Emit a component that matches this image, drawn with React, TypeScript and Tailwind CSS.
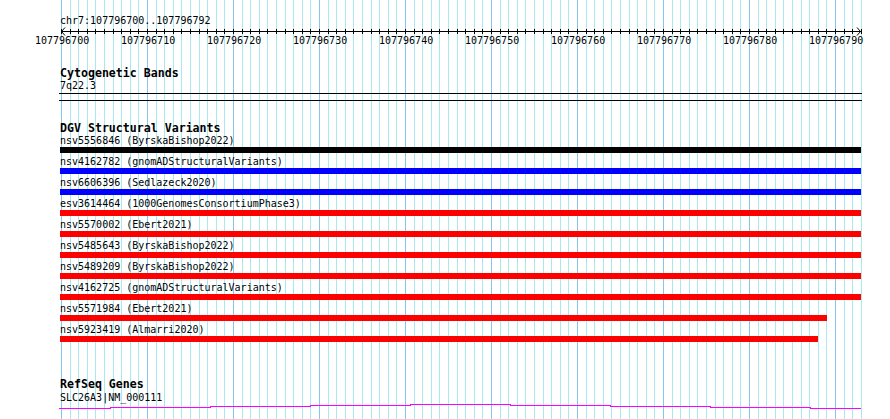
import React from "react";

const X0 = 61;
const STEP = 8.6;
const gx = (i: number) => Math.round(X0 + i * STEP);

const rows: { label: string; color: string; w: number }[] = [
  { label: "nsv5556846 (ByrskaBishop2022)", color: "bg-black", w: 801 },
  { label: "nsv4162782 (gnomADStructuralVariants)", color: "bg-[#0000ff]", w: 801 },
  { label: "nsv6606396 (Sedlazeck2020)", color: "bg-[#0000ff]", w: 801 },
  { label: "esv3614464 (1000GenomesConsortiumPhase3)", color: "bg-[#ff0000]", w: 801 },
  { label: "nsv5570002 (Ebert2021)", color: "bg-[#ff0000]", w: 801 },
  { label: "nsv5485643 (ByrskaBishop2022)", color: "bg-[#ff0000]", w: 801 },
  { label: "nsv5489209 (ByrskaBishop2022)", color: "bg-[#ff0000]", w: 801 },
  { label: "nsv4162725 (gnomADStructuralVariants)", color: "bg-[#ff0000]", w: 801 },
  { label: "nsv5571984 (Ebert2021)", color: "bg-[#ff0000]", w: 767 },
  { label: "nsv5923419 (Almarri2020)", color: "bg-[#ff0000]", w: 758 },
];

function Grid() {
  const lines = [];
  for (let i = 0; i <= 93; i++) {
    lines.push(
      <rect
        key={i}
        x={gx(i)}
        y={0}
        width={1}
        height={419}
        fill={i % 10 === 0 ? "#86c6ee" : "#a8e8f0"}
      />
    );
  }
  return (
    <svg
      className="absolute left-0 top-0"
      width={890}
      height={419}
      shapeRendering="crispEdges"
    >
      {lines}
    </svg>
  );
}

function Ruler() {
  const ticks = [];
  for (let i = 0; i <= 93; i++) {
    ticks.push(<rect key={i} x={gx(i)} y={2} width={1} height={5} fill="#000" />);
  }
  const labels = [];
  for (let i = 0; i <= 90; i += 10) {
    labels.push(
      <div
        key={i}
        className="absolute top-[8px] w-[54px] text-center text-[10px] leading-[11px]"
        style={{ left: gx(i) - 26 }}
      >
        {107796700 + i}
      </div>
    );
  }
  return (
    <div className="relative h-[19px] w-[890px]">
      <svg className="absolute left-0 top-0" width={890} height={10}>
        <g shapeRendering="crispEdges">
          <rect x={61} y={4} width={800} height={1} fill="#000" />
          {ticks}
        </g>
        <path d="M65 0.5 L61.5 4.5 L65 8.5" stroke="#000" strokeWidth={1} fill="none" />
        <path d="M857 0.5 L860.5 4.5 L857 8.5" stroke="#000" strokeWidth={1} fill="none" />
      </svg>
      {labels}
    </div>
  );
}

function Wave() {
  const segs: [number, number, number][] = [
    [59, 110, 4],
    [110, 210, 3],
    [210, 310, 2],
    [310, 410, 1],
    [410, 510, 0],
    [510, 610, 1],
    [610, 710, 2],
    [710, 810, 3],
    [810, 861, 4],
  ];
  let d = "";
  segs.forEach(([a, b, y], k) => {
    d += (k === 0 ? `M${a} ${y + 1.5}` : ` L${a} ${y + 1.5}`) + ` L${b} ${y + 1.5}`;
  });
  return (
    <svg className="block" width={890} height={8} shapeRendering="crispEdges">
      <path d={d} stroke="#ff00ff" strokeWidth={1} fill="none" />
    </svg>
  );
}

export default function App() {
  return (
    <div className="relative h-[419px] w-[890px] overflow-hidden bg-white font-['DejaVu_Sans_Mono','Liberation_Mono',monospace] text-black">
      <Grid />
      <div className="relative flex flex-col">
        <div className="h-[15px]" />
        <div className="h-[12px] pl-[60px] text-[10px] leading-[12px]">
          chr7:107796700..107796792
        </div>
        <Ruler />
        <div className="mt-[20px] h-[14px] pl-[60px] text-[11.6px] font-bold leading-[14px]">
          Cytogenetic Bands
        </div>
        <div className="h-[11px] pl-[60px] text-[10px] leading-[11px]">7q22.3</div>
        <div className="ml-[59px] mt-[2px] h-[8px] w-[803px] border-y border-black" />
        <div className="mt-[20px] h-[14px] pl-[60px] text-[11.6px] font-bold leading-[14px]">
          DGV Structural Variants
        </div>
        <div className="flex flex-col pl-[60px]">
          {rows.map((r) => (
            <div key={r.label} className="flex flex-col pb-[3px]">
              <div className="h-[11px] whitespace-pre text-[10px] leading-[11px]">{r.label}</div>
              <div className={`mt-[1px] h-[6px] ${r.color}`} style={{ width: r.w }} />
            </div>
          ))}
        </div>
        <div className="mt-[32px] h-[14px] pl-[60px] text-[11.6px] font-bold leading-[14px]">
          RefSeq Genes
        </div>
        <div className="mt-[1px] h-[11px] pl-[60px] text-[10px] leading-[11px]">
          SLC26A3|NM_000111
        </div>
        <Wave />
      </div>
    </div>
  );
}
